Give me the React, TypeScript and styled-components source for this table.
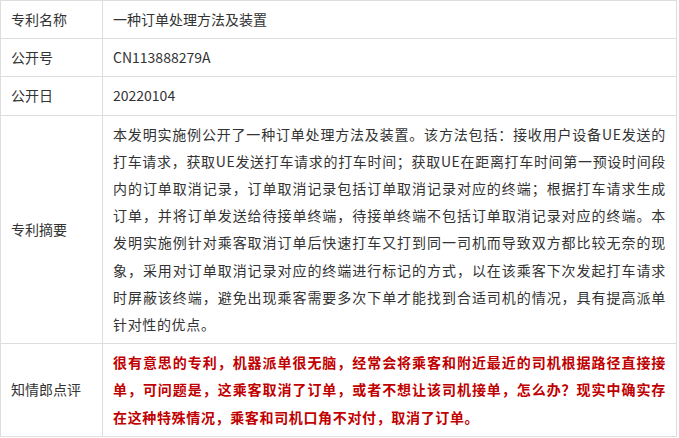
import React from 'react'
import styled, { createGlobalStyle } from 'styled-components'

const GlobalStyle = createGlobalStyle`
  html, body {
    margin: 0;
    padding: 0;
    background: #ffffff;
  }
`

const Table = styled.table`
  width: 677px;
  border-collapse: collapse;
  table-layout: fixed;
  font-family: "Noto Sans CJK SC", "Noto Sans", sans-serif;
  font-size: 14px;
  line-height: 27.2px;
  color: #333333;
`

const LabelCell = styled.td`
  width: 81px;
  padding: 5px 10px;
  border: 1px solid #dddddd;
  vertical-align: middle;
  white-space: nowrap;
`

const ValueCell = styled.td`
  padding: 5px 10px;
  border: 1px solid #dddddd;
  vertical-align: top;
  text-align: justify;
  letter-spacing: ${(props: { $spaced?: boolean }) => (props.$spaced ? '0.65px' : '0')};
`

const Comment = styled.span`
  color: #c00000;
  font-weight: bold;
`

interface RowData {
  label: string
  value: string
  highlight?: boolean
  spaced?: boolean
}

const rows: RowData[] = [
  { label: '专利名称', value: '一种订单处理方法及装置' },
  { label: '公开号', value: 'CN113888279A' },
  { label: '公开日', value: '20220104' },
  {
    label: '专利摘要',
    spaced: true,
    value:
      '本发明实施例公开了一种订单处理方法及装置。该方法包括：接收用户设备UE发送的打车请求，获取UE发送打车请求的打车时间；获取UE在距离打车时间第一预设时间段内的订单取消记录，订单取消记录包括订单取消记录对应的终端；根据打车请求生成订单，并将订单发送给待接单终端，待接单终端不包括订单取消记录对应的终端。本发明实施例针对乘客取消订单后快速打车又打到同一司机而导致双方都比较无奈的现象，采用对订单取消记录对应的终端进行标记的方式，以在该乘客下次发起打车请求时屏蔽该终端，避免出现乘客需要多次下单才能找到合适司机的情况，具有提高派单针对性的优点。'
  },
  {
    label: '知情郎点评',
    spaced: true,
    highlight: true,
    value:
      '很有意思的专利，机器派单很无脑，经常会将乘客和附近最近的司机根据路径直接接单，可问题是，这乘客取消了订单，或者不想让该司机接单，怎么办？现实中确实存在这种特殊情况，乘客和司机口角不对付，取消了订单。'
  }
]

const App: React.FC = () => (
  <>
    <GlobalStyle />
    <Table>
      <tbody>
        {rows.map((row) => (
          <tr key={row.label}>
            <LabelCell>{row.label}</LabelCell>
            <ValueCell $spaced={row.spaced}>
              {row.highlight ? <Comment>{row.value}</Comment> : row.value}
            </ValueCell>
          </tr>
        ))}
      </tbody>
    </Table>
  </>
)

export default App
